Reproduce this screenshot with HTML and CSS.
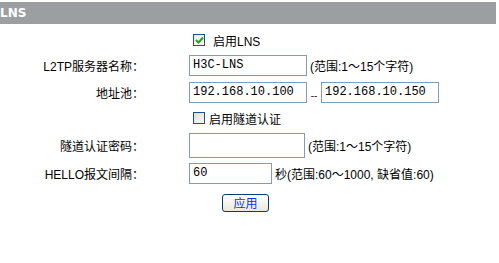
FILE: index.html
```html
<!DOCTYPE html>
<html lang="zh-CN">
<head>
    <meta charset="UTF-8">
    <title>LNS</title>
    <link rel="stylesheet" href="styles.css">
</head>
<body>
    <div class="title">LNS</div>
    <div class="form">
        <div class="row r-check1">
            <span class="label"></span>
            <label class="check">
                <span class="box checked">
                    <svg width="9" height="9" viewBox="0 0 9 9"><path d="M1 4 L3.5 6.5 L8 1.5" fill="none" stroke="#21a121" stroke-width="2"/></svg>
                </span>
                <span class="check-text wide">启用LNS</span>
            </label>
        </div>
        <div class="row r-name">
            <span class="label">L2TP服务器名称：</span>
            <input class="field" type="text" value="H3C-LNS">
            <span class="hint">(范围:1～15个字符)</span>
        </div>
        <div class="row r-pool">
            <span class="label">地址池：</span>
            <input class="field" type="text" value="192.168.10.100">
            <span class="dash">--</span>
            <input class="field" type="text" value="192.168.10.150">
        </div>
        <div class="row r-check2">
            <span class="label"></span>
            <label class="check">
                <span class="box"></span>
                <span class="check-text">启用隧道认证</span>
            </label>
        </div>
        <div class="row r-pwd">
            <span class="label">隧道认证密码：</span>
            <input class="field pwd" type="password">
            <span class="hint">(范围:1～15个字符)</span>
        </div>
        <div class="row r-hello">
            <span class="label">HELLO报文间隔：</span>
            <input class="field short" type="text" value="60">
            <span class="hint">秒(范围:60～1000, 缺省值:60)</span>
        </div>
        <div class="row r-btn">
            <span class="label"></span>
            <button class="apply">应用</button>
        </div>
    </div>
</body>
</html>
```

FILE: styles.css
```css
body {
    margin: 0;
    font-family: "Liberation Sans", "Noto Sans CJK SC", sans-serif;
    font-size: 12px;
    color: #000;
    background: #fff;
}
.title {
    margin-top: 2px;
    width: 496px;
    height: 22px;
    line-height: 22px;
    background-color: #9c9fa2;
    color: #fff;
    font-family: "DejaVu Sans", sans-serif;
    font-weight: bold;
    font-size: 12px;
}
.form {
    padding-top: 4px;
}
.row {
    display: flex;
    align-items: center;
}
.r-check1 { height: 24px; }
.r-name { height: 26px; }
.r-pool { height: 28px; }
.r-check2 { height: 24px; }
.r-pwd { height: 30px; }
.r-hello { height: 26px; }
.r-btn { height: 34px; }
.label {
    width: 144px;
    margin-right: 45px;
    text-align: right;
    white-space: nowrap;
}
.field {
    box-sizing: border-box;
    width: 118px;
    height: 21px;
    margin: 0;
    padding: 1px 3px;
    border: 1px solid #7f9db9;
    font-family: "Liberation Mono", "Noto Sans CJK SC", monospace;
    font-size: 12px;
    color: #000;
    background: #fff;
}
.field.pwd {
    width: 116px;
    height: 25px;
}
.field.short {
    width: 83px;
}
.hint {
    margin-left: 3px;
    white-space: nowrap;
}
.dash {
    width: 14px;
    padding-top: 6px;
    text-align: center;
    font-size: 10px;
    color: #402010;
}
.check {
    display: flex;
    align-items: center;
    margin-left: 4px;
}
.box {
    box-sizing: border-box;
    width: 12px;
    height: 12px;
    border: 1px solid #1c5180;
    background: linear-gradient(135deg, #dcdcd7, #fbfbfa);
    display: flex;
    align-items: center;
    justify-content: center;
}
.box.checked {
    background: linear-gradient(135deg, #e9e9e4, #ffffff);
}
.check-text {
    margin-left: 4px;
}
.check-text.wide {
    margin-left: 8px;
}
.apply {
    box-sizing: border-box;
    width: 47px;
    height: 18px;
    margin-left: 33px;
    padding: 0;
    border: 1px solid #003c74;
    border-radius: 3px;
    background: linear-gradient(#ffffff, #ece9d8);
    color: #0033ff;
    font-family: "Noto Sans CJK SC", sans-serif;
    font-size: 12px;
    line-height: 16px;
    cursor: pointer;
}
```
